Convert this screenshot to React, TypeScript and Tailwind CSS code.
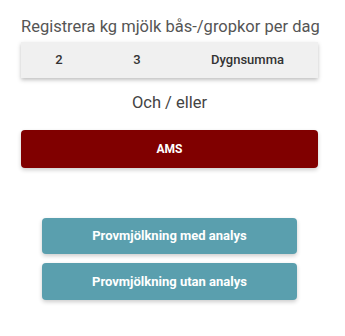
export default function App() {
  return (
    <div className="w-[345px] h-[336px] bg-white" style={{ fontFamily: "Roboto, 'Liberation Sans', sans-serif" }}>
      <div className="ml-[21px] w-[297px] pt-[15px] flex flex-col">
        <h1 className="text-center text-[16.5px] leading-[24px] text-[#555555] whitespace-nowrap">
          Registrera kg mjölk bås-/gropkor per dag
        </h1>

        {/* Milking times row */}
        <div className="mt-[3px] h-[36px] bg-[#f0f0f0] shadow-[0_2px_4px_rgba(0,0,0,0.25)] grid grid-cols-[76px_80px_1fr] items-center text-[13px] font-medium text-[#333333]">
          <span className="text-center">2</span>
          <span className="text-center">3</span>
          <span className="text-center">Dygnsumma</span>
        </div>

        <p className="mt-[13px] text-center text-[16.5px] leading-[24px] text-[#444444]">Och / eller</p>

        <button className="mt-[15px] h-[38px] rounded-[4px] bg-[#800000] text-white text-[12px] font-bold shadow-[0_2px_4px_rgba(0,0,0,0.2)]">
          AMS
        </button>

        <div className="mt-[50px] mx-[21px] flex flex-col gap-[9px]">
          <button className="h-[36px] rounded-[4px] bg-[#5a9fae] text-white text-[13px] font-bold shadow-[0_2px_4px_rgba(0,0,0,0.2)]">
            Provmjölkning med analys
          </button>
          <button className="h-[37px] rounded-[4px] bg-[#5a9fae] text-white text-[13px] font-bold shadow-[0_2px_4px_rgba(0,0,0,0.2)]">
            Provmjölkning utan analys
          </button>
        </div>
      </div>
    </div>
  );
}
